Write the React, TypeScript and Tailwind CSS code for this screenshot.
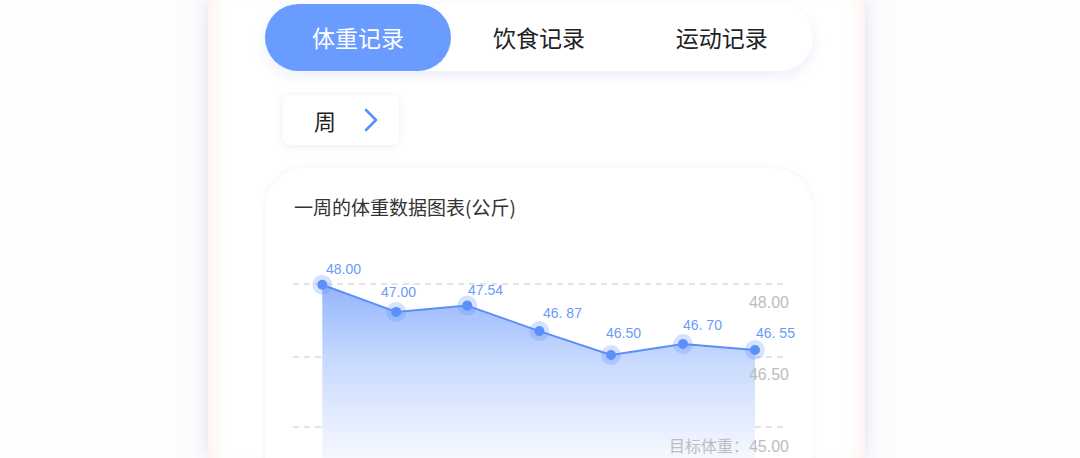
import React from 'react';

const points = [
  { x: 322.3, y: 284.8, label: '48.00', lx: 326, ly: 274 },
  { x: 396.2, y: 311.9, label: '47.00', lx: 381, ly: 297 },
  { x: 467.3, y: 305.6, label: '47.54', lx: 468, ly: 295 },
  { x: 539.4, y: 331.1, label: '46. 87', lx: 543, ly: 318 },
  { x: 611, y: 355, label: '46.50', lx: 606, ly: 338 },
  { x: 683, y: 344, label: '46. 70', lx: 683, ly: 330 },
  { x: 755, y: 350, label: '46. 55', lx: 756, ly: 338 },
];

const tabs = ['体重记录', '饮食记录', '运动记录'];

const WeightChart = () => {
  const line = points.map((p, i) => `${i === 0 ? 'M' : 'L'}${p.x},${p.y}`).join(' ');
  const area = `${line} L755,470 L322.3,470 Z`;

  return (
    <svg className="block mt-[29px]" width={548} height={208} viewBox="265 250 548 208">
      <defs>
        <linearGradient id="areaFill" x1="0" y1="284" x2="0" y2="458" gradientUnits="userSpaceOnUse">
          <stop offset="0" stopColor="#93b5fd" />
          <stop offset="0.45" stopColor="#c9daff" />
          <stop offset="1" stopColor="#f5f8ff" />
        </linearGradient>
      </defs>

      {[284, 357, 427].map((y) => (
        <line key={y} x1={293} x2={788} y1={y} y2={y} stroke="#c8c8c8" strokeWidth={1} strokeDasharray="6 5" />
      ))}

      <path d={area} fill="url(#areaFill)" />
      <path d={line} fill="none" stroke="#5b8ff9" strokeWidth={2} strokeLinejoin="round" />

      {points.map((p) => (
        <g key={p.label}>
          <circle cx={p.x} cy={p.y} r={10} fill="#5b8ff9" fillOpacity={0.25} />
          <circle cx={p.x} cy={p.y} r={5} fill="#5b8ff9" />
          <text x={p.lx} y={p.ly} fontSize={14} fill="#6a9af8" fontFamily="'Liberation Sans', Arial, sans-serif">
            {p.label}
          </text>
        </g>
      ))}

      <g fontFamily="'Liberation Sans', 'Noto Sans CJK SC', sans-serif" fontSize={16} fill="#bdbdbd" textAnchor="end">
        <text x={789} y={308}>48.00</text>
        <text x={789} y={380}>46.50</text>
        <text x={789} y={452}>目标体重：45.00</text>
      </g>
    </svg>
  );
};

export default function App() {
  return (
    <div
      className="w-[1080px] h-[458px] overflow-hidden bg-[#fdfdfe]"
      style={{ fontFamily: "'Noto Sans CJK SC', 'Noto Sans', sans-serif" }}
    >
      <div className="ml-[208px] w-[657px] h-full bg-white pl-[57px] pr-[52px] shadow-[0_0_18px_rgba(196,202,224,0.55),inset_16px_0_16px_-10px_rgba(255,232,232,0.6),inset_-16px_0_16px_-10px_rgba(255,232,232,0.6)]">
        {/* tabs */}
        <div className="pt-[4px]">
          <div className="grid grid-cols-3 h-[67px] rounded-full bg-white shadow-[0_5px_14px_rgba(110,140,230,0.14)]">
            {tabs.map((t, i) => (
              <div
                key={t}
                className={
                  i === 0
                    ? 'flex items-center justify-center rounded-full bg-[#6a9cff] text-white text-[23px] w-[186px]'
                    : 'flex items-center justify-center text-[#222222] text-[23px]'
                }
              >
                {t}
              </div>
            ))}
          </div>
        </div>

        {/* period picker */}
        <div className="mt-[24px] ml-[18px] flex items-center w-[116px] h-[50px] rounded-[8px] bg-white shadow-[0_1px_8px_rgba(120,150,230,0.16)]">
          <span className="ml-[31px] text-[22px] text-[#222222] leading-none">周</span>
          <svg className="ml-[27px]" width="16" height="24" viewBox="0 0 16 24">
            <polyline points="3,2 13,12 3,22" fill="none" stroke="#5b8ff9" strokeWidth="2.6" strokeLinecap="round" strokeLinejoin="round" />
          </svg>
        </div>

        {/* chart card */}
        <div className="mt-[23px] h-[330px] rounded-[40px] bg-white shadow-[0_0_6px_rgba(150,175,235,0.18)]">
          <div className="pt-[25px] pl-[29px] text-[19px] leading-[28px] text-[#333333]">一周的体重数据图表(公斤)</div>
          <WeightChart />
        </div>
      </div>
    </div>
  );
}
